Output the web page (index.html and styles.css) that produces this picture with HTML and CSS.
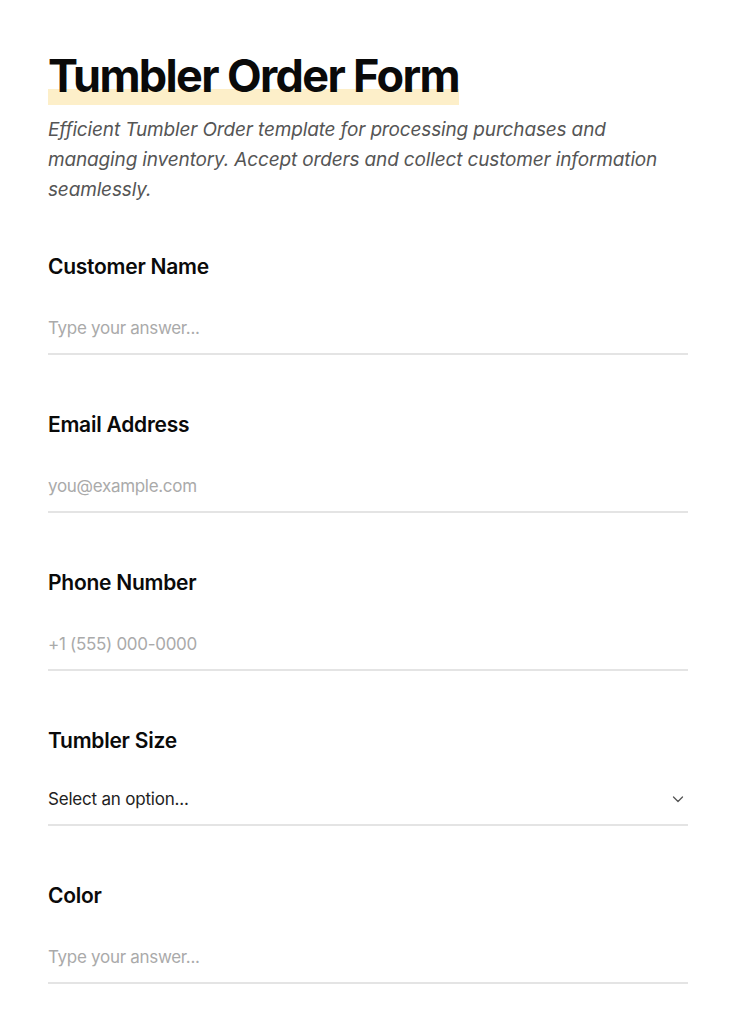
FILE: index.html
```html
<!DOCTYPE html>
<html lang="en">
<head>
<meta charset="utf-8">
<title>Tumbler Order Form</title>
<link rel="stylesheet" href="styles.css">
</head>
<body>
<main class="page">
  <header class="intro">
    <h1 class="title"><span class="title-mark">Tumbler Order Form</span></h1>
    <p class="subtitle">Efficient Tumbler Order template for processing purchases and managing inventory. Accept orders and collect customer information seamlessly.</p>
  </header>
  <form class="form">
    <div class="field">
      <label class="label" for="name">Customer Name</label>
      <input class="input" id="name" type="text" placeholder="Type your answer...">
    </div>
    <div class="field">
      <label class="label" for="email">Email Address</label>
      <input class="input" id="email" type="email" placeholder="you@example.com">
    </div>
    <div class="field">
      <label class="label" for="phone">Phone Number</label>
      <input class="input" id="phone" type="tel" placeholder="+1 (555) 000-0000">
    </div>
    <div class="field">
      <span class="label">Tumbler Size</span>
      <div class="select">
        <span class="select-text">Select an option...</span>
        <svg class="chevron" width="14" height="14" viewBox="0 0 14 14" fill="none"><path d="M2.5 5l4.5 4.5L11.5 5" stroke="#555" stroke-width="1.3" stroke-linecap="round" stroke-linejoin="round"/></svg>
      </div>
    </div>
    <div class="field">
      <label class="label" for="color">Color</label>
      <input class="input" id="color" type="text" placeholder="Type your answer...">
    </div>
  </form>
</main>
</body>
</html>
```
FILE: styles.css
```css
* { box-sizing: border-box; }
html, body { margin: 0; padding: 0; background: #ffffff; }
body { font-family: "Inter", "Noto Sans", sans-serif; color: #111; }
.page { padding: 50px 48px 0 48px; width: 736px; }
.intro { margin-bottom: 50px; }
.title {
  margin: 0;
  font-size: 45px;
  line-height: 52px;
  font-weight: 700;
  letter-spacing: -1.65px;
  color: #0a0a0a;
}
.title-mark {
  background: linear-gradient(to bottom, transparent 0, transparent 41px, #fdefc9 41px, #fdefc9 100%);
  padding-bottom: 2px;
}
.subtitle {
  margin: 13px 0 0 0;
  font-size: 19px;
  line-height: 30px;
  font-style: italic;
  color: #555;
  letter-spacing: -0.15px;
}
.form { display: flex; flex-direction: column; gap: 58px; }
.field { display: flex; flex-direction: column; gap: 26px; }
.label {
  font-size: 21px;
  line-height: 24px;
  font-weight: 600;
  color: #0a0a0a;
  letter-spacing: -0.25px;
}
.input {
  font-family: inherit;
  font-size: 17px;
  height: 50px;
  border: none;
  border-bottom: 2px solid #e4e4e4;
  padding: 0 0 3px 0;
  outline: none;
  background: transparent;
  color: #222;
  letter-spacing: -0.3px;
}
.input::placeholder { color: #aaaaaa; }
.select {
  height: 47px;
  border-bottom: 2px solid #e4e4e4;
  display: flex;
  align-items: center;
  justify-content: space-between;
  padding: 0 3px 5px 0;
}
.select-text { font-size: 17px; color: #222; letter-spacing: -0.2px; }
.chevron { display: block; }
```
